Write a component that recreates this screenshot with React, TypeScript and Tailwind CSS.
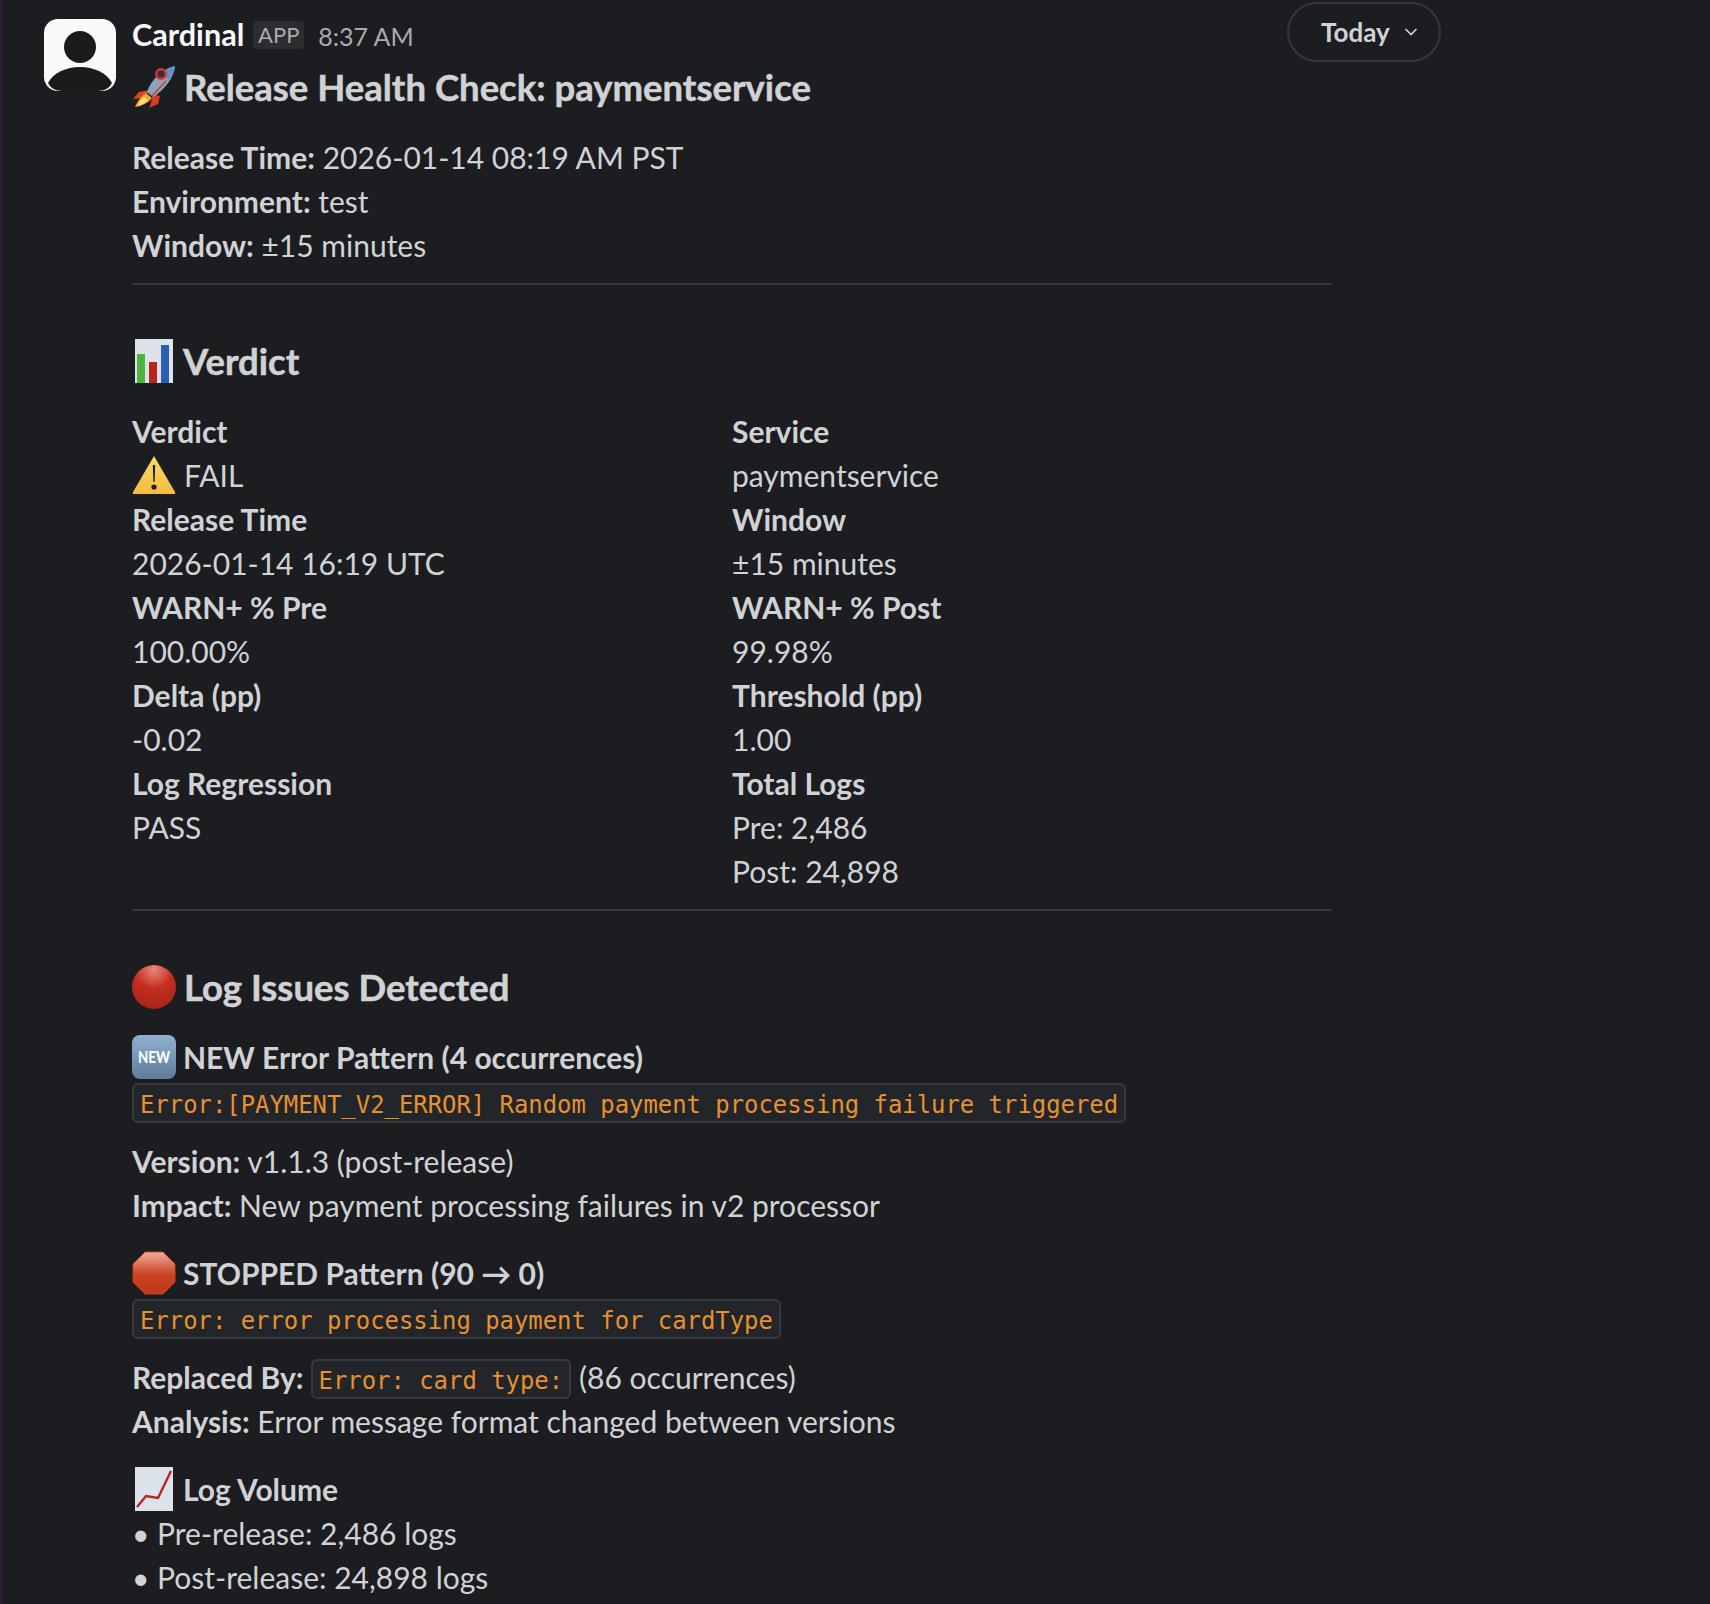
import React from 'react';

const RocketIcon = () => (
  <svg viewBox="0 0 44 44" className="w-[44px] h-[44px] shrink-0">
    <path d="M18 25 L7 27 L1 34 L11 33 Z" fill="#e0431f" />
    <path d="M21 29 L19 38 L17 43 L26 39 L28 31 Z" fill="#d83b1e" />
    <path d="M15 27 C19 14 31 4 43 1 C42 13 32 25 21 32 Z" fill="#8aa3ba" />
    <path d="M26 11 C31 5 38 2 43 1 C42 6 40 11 36 15 C34 11 30 10 26 11 Z" fill="#5f93c9" />
    <circle cx="29" cy="9" r="6" fill="#d9342b" />
    <circle cx="29" cy="9" r="3.5" fill="#2b3240" />
    <path d="M14 28 L20 33 C16 38 10 41 3 42 C5 37 9 31 14 28 Z" fill="#f5a623" />
    <path d="M12 32 L16 35 C13 38 9 40 6 41 C7 37 9 34 12 32 Z" fill="#ffe27a" />
    <path d="M20 31 L34 16" stroke="#d83b1e" strokeWidth="1.5" />
  </svg>
);

const BarChartIcon = () => (
  <svg viewBox="0 0 40 44" className="w-[40px] h-[44px] shrink-0 mx-[2px]">
    <rect x="1" y="0" width="38" height="44" fill="#dde3ea" />
    <rect x="3" y="15" width="8" height="29" fill="#4cb53b" />
    <rect x="15" y="23" width="8" height="21" fill="#b8261b" />
    <rect x="27" y="6" width="8" height="38" fill="#2a5fb8" />
  </svg>
);

const WarningIcon = () => (
  <svg viewBox="0 0 44 40" className="w-[44px] h-[40px] shrink-0">
    <defs>
      <linearGradient id="warn" x1="0" y1="0" x2="0" y2="1">
        <stop offset="0" stopColor="#fbd968" />
        <stop offset="1" stopColor="#f4bc3c" />
      </linearGradient>
    </defs>
    <path d="M22 1 L43 37 Q44 39 42 39 L2 39 Q0 39 1 37 Z" fill="url(#warn)" />
    <path d="M20.8 10 L23.2 10 L22.6 27 L21.4 27 Z" fill="#1a1a1a" />
    <circle cx="22" cy="32" r="2.6" fill="#1a1a1a" />
  </svg>
);

const RedCircleIcon = () => (
  <svg viewBox="0 0 44 44" className="w-[44px] h-[44px] shrink-0">
    <defs>
      <radialGradient id="red" cx="0.5" cy="0.1" r="0.95">
        <stop offset="0" stopColor="#e9897c" />
        <stop offset="0.45" stopColor="#c52e22" />
        <stop offset="1" stopColor="#a62318" />
      </radialGradient>
    </defs>
    <circle cx="22" cy="22" r="22" fill="url(#red)" />
  </svg>
);

const NewIcon = () => (
  <svg viewBox="0 0 44 44" className="w-[44px] h-[44px] shrink-0">
    <defs>
      <linearGradient id="newb" x1="0" y1="0" x2="0" y2="1">
        <stop offset="0" stopColor="#8fb2d2" />
        <stop offset="1" stopColor="#5f7b98" />
      </linearGradient>
    </defs>
    <rect width="44" height="44" rx="8" fill="url(#newb)" />
    <text transform="translate(22 28) scale(0.95 1.2)" textAnchor="middle" fontFamily="Lato, sans-serif" fontWeight="900" fontSize="14" fill="#fff">NEW</text>
  </svg>
);

const StopIcon = () => (
  <svg viewBox="0 0 44 44" className="w-[44px] h-[44px] shrink-0">
    <defs>
      <linearGradient id="stop" x1="0" y1="0" x2="0" y2="1">
        <stop offset="0" stopColor="#f0ac9c" />
        <stop offset="0.55" stopColor="#c9411f" />
        <stop offset="1" stopColor="#bf3a1b" />
      </linearGradient>
    </defs>
    <path d="M13 1 L31 1 L43 13 L43 31 L31 43 L13 43 L1 31 L1 13 Z" fill="url(#stop)" stroke="#c9401f" strokeWidth="1" />
  </svg>
);

const TrendIcon = () => (
  <svg viewBox="0 0 40 44" className="w-[40px] h-[44px] shrink-0 mx-[2px]">
    <rect x="1" y="0" width="38" height="44" fill="#dde3ea" />
    <path d="M3 40 L12 29 L24 31 L37 4" fill="none" stroke="#b8261b" strokeWidth="2.4" />
  </svg>
);

function Code({ children }: { children: React.ReactNode }) {
  return (
    <code className="inline-block h-[40px] leading-[40px] px-[6px] rounded-[6px] border-2 border-[#37393d] bg-[#222529] text-[#e8912d] text-[23.9px] font-['DejaVu_Sans_Mono',monospace] whitespace-pre">
      {children}
    </code>
  );
}

function Cell({ label, lines }: { label: string; lines: React.ReactNode[] }) {
  return (
    <div>
      <div className="font-bold">{label}</div>
      {lines.map((line, i) => (
        <div key={i}>{line}</div>
      ))}
    </div>
  );
}

const Divider = () => <div className="h-[2px] bg-[#37393d] w-[1200px]" />;

export default function App() {
  return (
    <div className="relative h-[1604px] overflow-hidden bg-[#1b1d21] text-[#d1d2d3] text-[30px] leading-[44px] font-['Lato',sans-serif] border-l-[3px] border-[#2c1d3a]">
      {/* date pill */}
      <div className="absolute left-[1284px] top-[2px] w-[154px] h-[60px] rounded-full border-2 border-[#35373b] bg-[#1b1d21] flex items-center gap-[14px] text-[26px] font-bold pl-[32px]">
        <span>Today</span>
        <svg viewBox="0 0 14 10" className="w-[14px] h-[10px]">
          <path d="M1.5 2 L7 7.5 L12.5 2" fill="none" stroke="#d1d2d3" strokeWidth="1.6" />
        </svg>
      </div>

      <div className="flex gap-[16px] pl-[41px] pt-[19px]">
        <svg viewBox="0 0 72 72" className="w-[72px] h-[72px] shrink-0">
          <rect width="72" height="72" rx="14" fill="#fafafa" />
          <circle cx="36" cy="28" r="16" fill="#1b1b1b" />
          <path d="M4 64 C9 54 22 48 36 48 C50 48 63 54 68 64 Q64 72 54 72 L18 72 Q8 72 4 64 Z" fill="#1b1b1b" />
        </svg>

        <div className="w-[1200px]">
          <div className="flex items-center h-[34px] mt-[-1px]">
            <span className="font-bold text-[#f8f8f8] text-[30.6px]">Cardinal</span>
            <span className="ml-[9px] h-[28px] w-[51px] rounded-[4px] bg-[#2b2d31] text-[#ababad] text-[22px] leading-[28px] text-center">APP</span>
            <span className="ml-[14px] text-[#ababad] text-[25px] mt-[1px]">8:37 AM</span>
          </div>

          <div className="flex items-center h-[44px] mt-[13px] text-[36.5px] font-bold [-webkit-text-stroke:0.5px_#d1d2d3]">
            <RocketIcon />
            <span className="ml-[8px]">Release Health Check: paymentservice</span>
          </div>

          <div className="mt-[26px]">
            <div><b>Release Time:</b> 2026-01-14 08:19 AM PST</div>
            <div><b>Environment:</b> test</div>
            <div><b>Window:</b> ±15 minutes</div>
          </div>

          <div className="mt-[16px]"><Divider /></div>

          <div className="flex items-center h-[44px] mt-[54px] text-[36.5px] font-bold [-webkit-text-stroke:0.5px_#d1d2d3]">
            <BarChartIcon />
            <span className="ml-[7px]">Verdict</span>
          </div>

          <div className="grid grid-cols-2 w-[1200px] mt-[26px]">
            <Cell label="Verdict" lines={[
              <span className="flex items-center"><WarningIcon /><span className="ml-[8px]">FAIL</span></span>,
            ]} />
            <Cell label="Service" lines={['paymentservice']} />
            <Cell label="Release Time" lines={['2026-01-14 16:19 UTC']} />
            <Cell label="Window" lines={['±15 minutes']} />
            <Cell label="WARN+ % Pre" lines={['100.00%']} />
            <Cell label="WARN+ % Post" lines={['99.98%']} />
            <Cell label="Delta (pp)" lines={['-0.02']} />
            <Cell label="Threshold (pp)" lines={['1.00']} />
            <Cell label="Log Regression" lines={['PASS']} />
            <Cell label="Total Logs" lines={['Pre: 2,486', 'Post: 24,898']} />
          </div>

          <div className="mt-[16px]"><Divider /></div>

          <div className="flex items-center h-[44px] mt-[54px] text-[36.5px] font-bold [-webkit-text-stroke:0.5px_#d1d2d3]">
            <RedCircleIcon />
            <span className="ml-[8px]">Log Issues Detected</span>
          </div>

          <div className="flex items-center h-[44px] mt-[26px] font-bold">
            <NewIcon />
            <span className="ml-[7px]">NEW Error Pattern (4 occurrences)</span>
          </div>
          <div className="h-[40px] mt-[4px] flex"><Code>Error:[PAYMENT_V2_ERROR] Random payment processing failure triggered</Code></div>

          <div className="mt-[16px]"><b>Version:</b> v1.1.3 (post-release)</div>
          <div><b>Impact:</b> New payment processing failures in v2 processor</div>

          <div className="flex items-center h-[44px] mt-[24px] font-bold">
            <StopIcon />
            <span className="ml-[7px]">STOPPED Pattern (90 → 0)</span>
          </div>
          <div className="h-[40px] mt-[4px] flex"><Code>Error: error processing payment for cardType</Code></div>

          <div className="mt-[16px] flex items-center h-[44px]">
            <b>Replaced By:</b>
            <span className="ml-[7px] flex mt-[4px]"><Code>Error: card type:</Code></span>
            <span className="ml-[8px]">(86 occurrences)</span>
          </div>
          <div><b>Analysis:</b> Error message format changed between versions</div>

          <div className="flex items-center h-[44px] mt-[24px] font-bold">
            <TrendIcon />
            <span className="ml-[7px]">Log Volume</span>
          </div>
          <div>• Pre-release: 2,486 logs</div>
          <div>• Post-release: 24,898 logs</div>
        </div>
      </div>
    </div>
  );
}
